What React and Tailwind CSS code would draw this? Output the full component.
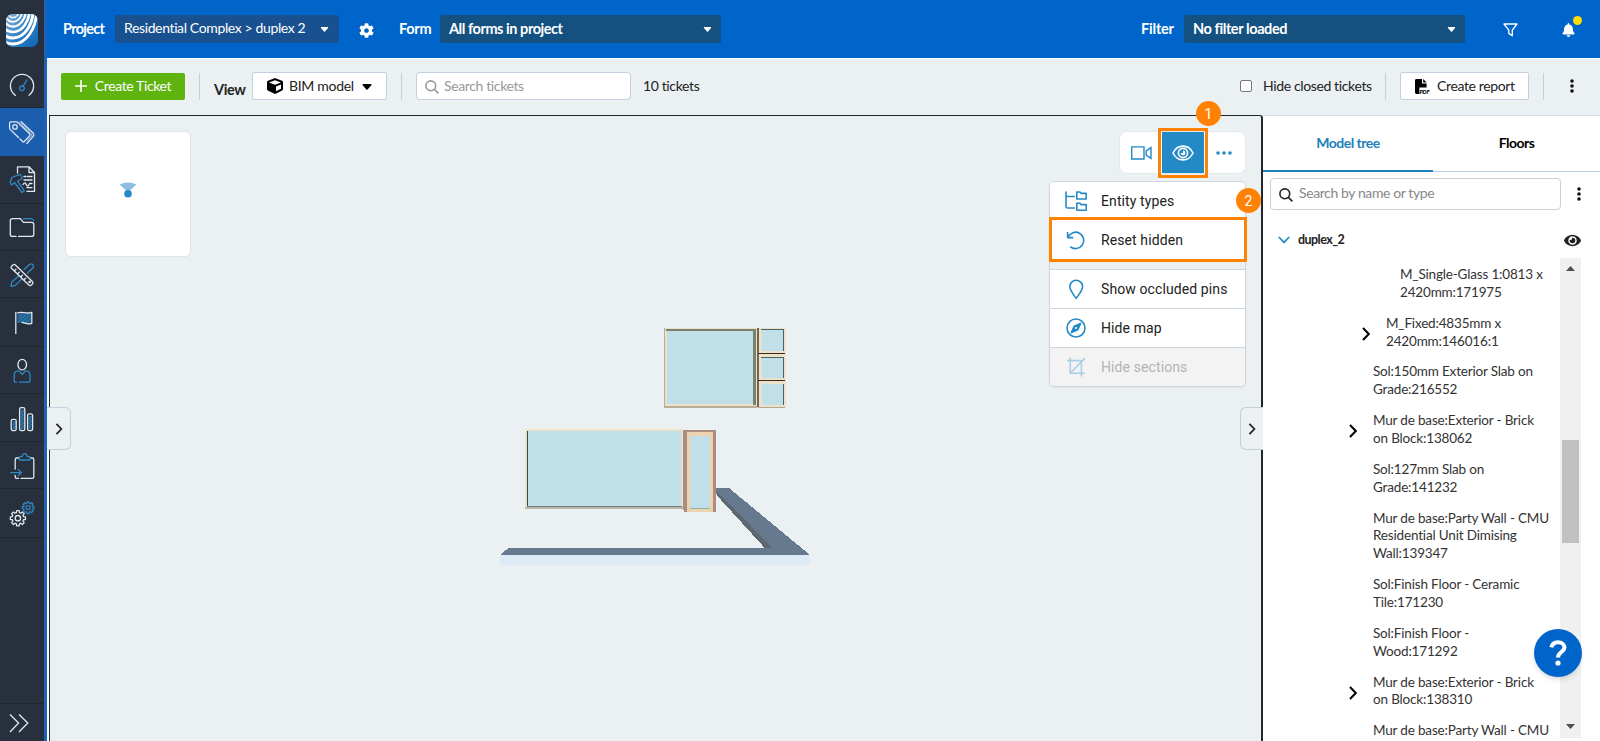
import React, { useState } from 'react';
import { FaBell, FaCog, FaCube, FaEye } from 'react-icons/fa';

const treeItems = [
  { name: 'M_Single-Glass 1:0813 x 2420mm:171975', level: 2 },
  { name: 'M_Fixed:4835mm x 2420mm:146016:1', level: 1, expandable: true },
  { name: 'Sol:150mm Exterior Slab on Grade:216552', level: 0 },
  { name: 'Mur de base:Exterior - Brick on Block:138062', level: 0, expandable: true },
  { name: 'Sol:127mm Slab on Grade:141232', level: 0 },
  { name: 'Mur de base:Party Wall - CMU Residential Unit Dimising Wall:139347', level: 0 },
  { name: 'Sol:Finish Floor - Ceramic Tile:171230', level: 0 },
  { name: 'Sol:Finish Floor - Wood:171292', level: 0 },
  { name: 'Mur de base:Exterior - Brick on Block:138310', level: 0, expandable: true },
  { name: 'Mur de base:Party Wall - CMU', level: 0 },
];

const levelPadding = ['pl-[110px]', 'pl-[123px]', 'pl-[137px]'];

const gearPath = (cx, cy, outer, inner) => {
  const points = [];
  for (let i = 0; i < 8; i++) {
    const base = (i * Math.PI) / 4;
    [[-0.26, inner], [-0.17, outer], [0.17, outer], [0.26, inner]].forEach(([da, r]) => {
      points.push(`${(cx + r * Math.cos(base + da)).toFixed(2)} ${(cy + r * Math.sin(base + da)).toFixed(2)}`);
    });
  }
  return `M${points.join('L')}Z`;
};

const BLUE = '#3187c0';

// icons are drawn on the sidebar's own grid, so each view box starts at its row
const sidebarItems = [
  {
    id: 'dashboard', top: 61, className: 'h-[47px]',
    icon: (
      <>
        <path d="M15.5 95.5A11.6 11.6 0 1 1 29 95.2" />
        <path d="M23 86.3 26.8 80" stroke={BLUE} />
        <circle cx="22" cy="88.3" r="2.3" stroke={BLUE} />
      </>
    ),
  },
  {
    id: 'tickets', top: 108, active: true, className: 'h-12',
    icon: (
      <>
        <path d="M18.5 137.5 10.4 129.6Q9.6 128.8 9.6 127.8V123Q9.6 121.8 10.8 121.8H16Q17.2 121.8 18 122.6L29.6 133.8Q30.5 134.9 29.6 135.9L24.5 141.2M20 139 22.5 141.5Q23.5 142.3 24.5 141.2" />
        <path d="M21.2 121.8 33.3 133.3Q34.2 135 33.3 136.4L26.8 143.5" />
        <path d="M19.2 121.8 31.5 134Q32.4 135 31.5 136L27.5 140.5" strokeWidth="0.7" />
        <circle cx="15" cy="126.9" r="2.2" />
      </>
    ),
  },
  {
    id: 'reports', top: 156, className: 'h-12',
    icon: (
      <>
        <path d="M17.5 173V166.8H29L34.5 172.5V191.4H27M29 166.8V172.5H34.5" />
        <path d="M24 176.5H26M27.5 176.5H32M24 180H32M23 184.5C25 181.5 25.5 183 26.5 185S28.5 186 29.5 183.5L32 183.5M27 187.6H32" />
        <path d="M10.3 182.5 11.8 177.5 20.2 174.3 22.4 178.3 17.6 181.2 18.4 182.4 24.4 190.8 22 192.6 15.6 184 14.8 182.6 11.4 185Z" stroke={BLUE} />
      </>
    ),
  },
  {
    id: 'documents', top: 204, className: 'h-[47px]',
    icon: (
      <>
        <path d="M16 236.4H12.6Q10.3 236.4 10.3 234.2V220.8Q10.3 218.6 12.5 218.6H20.4L23.4 222.4H31.6Q33.8 222.4 33.8 224.6V234.2Q33.8 236.4 31.6 236.4H18.5" />
        <path d="M23.5 218.6H31Q33.4 218.6 33.8 220.6" stroke={BLUE} />
      </>
    ),
  },
  {
    id: 'drawings', top: 251, className: 'h-[47px]',
    icon: (
      <>
        <path d="M24 269.5 29.6 264.6Q31.5 263.2 33 264.7 34.2 266.2 33 267.8L27.5 273M18.6 276 11.8 282 11 286.4 15.4 285.4 21.8 279" stroke={BLUE} />
        <path d="M11.2 268Q10.6 267 11.5 266.2L13.2 264.8Q14.4 264 15.4 265L32.6 281.8Q33.4 282.8 32.6 283.8L31 285.2Q29.9 286 28.8 285Z" />
        <path d="M14.4 270.8 16 269.2M17.6 273.8 19.2 272.2M20.8 276.8 22.4 275.2M24 279.8 25.6 278.2" />
        <circle cx="29.6" cy="282" r="0.7" />
      </>
    ),
  },
  {
    id: 'flags', top: 298, className: 'h-[49px]',
    icon: (
      <>
        <path d="M17.5 322.5V314.5C22 311.5 26 315 31 313V323C26 325 22 321.2 17.5 323.4Z" fill="#23628f" stroke="none" />
        <path d="M18.5 318 22 314M18.5 322 25.5 314.5M22.5 322 29 314.8M26 323 30.5 318" stroke={BLUE} strokeWidth="0.9" />
        <path d="M15.8 333.4V312.5M17.5 313C22 310.8 26 314.6 31.8 312.3V323.3C28 325 25 322.8 22 322.4" />
      </>
    ),
  },
  {
    id: 'people', top: 347, className: 'h-[47px]',
    icon: (
      <>
        <ellipse cx="22.2" cy="364.6" rx="4.3" ry="5.3" />
        <path d="M16.5 382.2H15.2Q14.2 382.2 14.2 381V375Q14.2 370.8 18.4 370.8H19L22.2 374.5 25.3 370.8H26Q30 370.8 30 375V381Q30 382.2 28.8 382.2H19.5" stroke={BLUE} />
      </>
    ),
  },
  {
    id: 'statistics', top: 394, className: 'h-12',
    icon: (
      <>
        <path d="M12.8 421H15.5V429.5H12.8ZM21 409.5H23.8V429.5H21ZM28.8 416H31.5V429.5H28.8Z" fill="#23628f" stroke="none" />
        <path d="M12.5 425 15 422.5M12.5 429 15 426.5M21 413 23.5 410.5M21 417 23.5 414.5M21 421 23.5 418.5M21 425 23.5 422.5M21 429 23.5 426.5M29 419 31.5 416.5M29 423 31.5 420.5M29 427 31.5 424.5" stroke={BLUE} strokeWidth="0.9" />
        <rect x="11.2" y="419.4" width="5" height="11.2" rx="1.6" />
        <rect x="19.6" y="407.6" width="5.2" height="23" rx="1.6" />
        <rect x="27.6" y="413.8" width="5" height="16.8" rx="1.6" />
      </>
    ),
  },
  {
    id: 'tasks', top: 442, className: 'h-[47px]',
    icon: (
      <>
        <path d="M18.6 458H16.6Q15.2 458 15.2 459.4V469M15.2 475.5V477Q15.2 478.4 16.6 478.4H18.5M21 478.4H32.4Q33.8 478.4 33.8 477V459.4Q33.8 458 32.4 458H30.6" />
        <path d="M19.4 460V456.6H22.2Q22.4 453.6 24.7 453.6 27 453.6 27.2 456.6H30V460ZM10.5 472.6H21.4M18.2 469.4 21.4 472.6 18.2 475.8" stroke={BLUE} />
      </>
    ),
  },
  {
    id: 'settings', top: 489, className: 'h-[49px]',
    icon: (
      <>
        <path d={gearPath(17.9, 518.2, 7.7, 5.8)} />
        <circle cx="17.9" cy="518.2" r="2.7" />
        <path d={gearPath(28.1, 507.7, 6, 4.6)} stroke={BLUE} />
        <circle cx="28.1" cy="507.7" r="2" stroke={BLUE} />
      </>
    ),
  },
];

const menuItems = [
  {
    label: 'Entity types', className: 'h-[38px]',
    icon: <path d="M2 1.5V16.5Q2 18 3.5 18H11M2 6.5H11M12.8 2H16L17 3.4H22.2V9H12.8ZM12.8 13.2H16L17 14.6H22.2V20.2H12.8Z" />,
  },
  {
    label: 'Reset hidden', className: 'h-10',
    icon: <path d="M3.6 3V8.6H9.2M4 8.2A8.2 8.2 0 1 1 6.2 17.6" />,
  },
  {
    label: 'Show occluded pins', className: 'h-[39px] mt-[9px] border-t',
    icon: <path d="M12.2 20.4C9.4 16.4 5.8 12.4 5.8 8.6A6.4 6.4 0 0 1 18.6 8.6C18.6 12.4 15 16.4 12.2 20.4Z" />,
  },
  {
    label: 'Hide map', className: 'h-[39px] border-t',
    icon: (
      <>
        <circle cx="12" cy="11" r="9" />
        <path d="M16.6 6.4 13.8 12.8 7.4 15.6 10.2 9.2Z" fill="#248ac6" />
        <circle cx="12" cy="11" r="1" fill="#fff" stroke="none" />
      </>
    ),
  },
  {
    label: 'Hide sections', className: 'h-[39px] border-t', disabled: true,
    icon: <path d="M6.2 1.5V17.2H20.8M3 4.6H17.4V20.5M6.2 17.2 20.8 2.4" />,
  },
];

const Caret = ({ className }) => (
  <svg className={className} width="10" height="6" viewBox="0 0 10 6" fill="currentColor">
    <path d="M1.2 0H8.8Q10 .2 9.3 1.2L5.6 5.4Q5 6 4.4 5.4L.7 1.2Q0 .2 1.2 0Z" />
  </svg>
);

const Dots = () => (
  <svg width="4" height="14" viewBox="0 0 4 14" fill="#111">
    <circle cx="2" cy="2" r="1.8" />
    <circle cx="2" cy="7" r="1.8" />
    <circle cx="2" cy="12" r="1.8" />
  </svg>
);

const Chevron = ({ className }) => (
  <svg className={className} width="8" height="14" viewBox="0 0 8 14" fill="none" stroke="currentColor" strokeWidth="2">
    <path d="M1 1 6.8 7 1 13" />
  </svg>
);

const SearchIcon = ({ className }) => (
  <svg className={className} width="14" height="14" viewBox="0 0 14 14" fill="none" stroke="currentColor" strokeWidth="1.6">
    <circle cx="5.8" cy="5.8" r="4.9" />
    <path d="M9.4 9.4 13.4 13.4" />
  </svg>
);

const Divider = ({ className }) => <div className={`h-[27px] w-px shrink-0 bg-[#c3d0dc] ${className}`} />;

const Sidebar = () => (
  <nav className="flex h-full w-11 shrink-0 flex-col bg-[#28303d]">
    <div className="flex h-[61px] pl-1.5 pt-3.5">
      <svg width="32" height="33" viewBox="0 0 32 33">
        <defs>
          <linearGradient id="logoFill" x1="0" y1="0" x2="1" y2="1">
            <stop offset="0" stopColor="#8db5da" />
            <stop offset="0.55" stopColor="#2a7cc3" />
            <stop offset="1" stopColor="#0d68b4" />
          </linearGradient>
          <clipPath id="logoClip">
            <rect width="32" height="33" rx="6.5" />
          </clipPath>
        </defs>
        <g clipPath="url(#logoClip)">
          <rect width="32" height="33" fill="url(#logoFill)" />
          <g fill="none" stroke="#fff">
            <ellipse cx="7" cy="-5" rx="6.4" ry="8.6" strokeWidth="1.3" />
            <ellipse cx="7" cy="-5" rx="9.6" ry="12.8" strokeWidth="1.7" />
            <ellipse cx="7" cy="-5" rx="13" ry="17.6" strokeWidth="2.2" />
            <ellipse cx="7" cy="-5" rx="16.6" ry="23" strokeWidth="2.7" />
            <ellipse cx="7" cy="-5" rx="20.2" ry="29" strokeWidth="3" />
            <ellipse cx="7" cy="-5" rx="23.8" ry="35" strokeWidth="2.8" />
          </g>
        </g>
      </svg>
    </div>
    {sidebarItems.map((item) => (
      <a
        key={item.id}
        className={`block w-11 border-b ${item.className} ${item.active ? 'border-[#1c5eae] bg-[#1c5eae]' : 'border-[#1f2631]'}`}
      >
        <svg
          width="44"
          height="46"
          viewBox={`0 ${item.top} 44 46`}
          fill="none"
          stroke="#dfe7ef"
          strokeWidth="1.3"
          strokeLinejoin="round"
          strokeLinecap="round"
        >
          {item.icon}
        </svg>
      </a>
    ))}
    <a className="mt-auto h-[38px] border-t border-[#1f2631]">
      <svg width="44" height="38" viewBox="0 0 44 38" fill="none" stroke="#dfe7ef" strokeWidth="1.3">
        <path d="M10 10.5 18.6 19 10 28M19 10.5 27.8 19 19 28" />
      </svg>
    </a>
  </nav>
);

const Header = () => (
  <header className="flex h-[58px] shrink-0 items-center bg-[#0065cb] pl-4 text-[14.5px] font-bold text-white">
    <span className="w-[52px] tracking-[-0.7px]">Project</span>
    <button className="flex h-7 w-56 items-center justify-between whitespace-nowrap rounded-[2px] bg-[#19508f] pl-[9px] pr-2.5 text-[14px] font-normal tracking-[-0.37px]">
      <span className="mb-[3px]">Residential Complex &gt; duplex 2</span>
      <Caret className="h-[5px] w-[9px]" />
    </button>
    <FaCog className="ml-5 mt-0.5 size-[15px]" />
    <span className="ml-[25px] w-[41px] tracking-[-0.3px]">Form</span>
    <button className="flex h-7 w-[281px] items-center justify-between rounded-[2px] bg-[#155180] pl-[9px] pr-[9px] font-bold tracking-[-0.45px]">
      All forms in project
      <Caret className="h-[5px] w-[9px]" />
    </button>
    <span className="ml-auto w-[43px] tracking-[-0.2px]">Filter</span>
    <button className="flex h-7 w-[281px] items-center justify-between rounded-[2px] bg-[#155180] pl-[9px] pr-[9px] font-bold tracking-[-0.4px]">
      No filter loaded
      <Caret className="h-[5px] w-[9px]" />
    </button>
    <svg className="ml-[38px] mt-0.5" width="15" height="14" viewBox="0 0 15 14" fill="none" stroke="#fff" strokeWidth="1.3" strokeLinejoin="round">
      <path d="M1 1H14L9.3 7.2V12.8L5.8 10.4V7.2Z" />
    </svg>
    <div className="relative ml-[44px] mr-[25px]">
      <FaBell className="mt-0.5 h-3.5 w-[13px]" />
      <span className="absolute -right-[7px] -top-[5px] size-[9px] rounded-full bg-[#fbdc06]" />
    </div>
  </header>
);

const Toolbar = () => {
  const [hideClosed, setHideClosed] = useState(false);

  return (
    <div className="flex h-[57px] shrink-0 items-center border-t border-white bg-[#ebf0f3] pb-0.5 pl-3.5 text-[14px] tracking-[-0.37px] text-[#222]">
      <button className="flex h-[27px] w-[124px] items-center justify-center gap-2 rounded-[2px] bg-[#5eb30f] text-white">
        <svg width="12" height="12" viewBox="0 0 12 12" stroke="#fff" strokeWidth="1.6">
          <path d="M6 0V12M0 6H12" />
        </svg>
        <span className="mb-0.5">Create Ticket</span>
      </button>
      <Divider className="ml-3.5" />
      <span className="ml-3.5 mt-2 w-[38px] text-[14.5px] font-bold tracking-[-0.4px]">View</span>
      <button className="flex h-7 w-[135px] items-center whitespace-nowrap rounded-[2px] border border-[#c3d0dc] bg-white pl-3.5">
        <FaCube className="mr-1.5 size-4 text-black" />
        <span className="mb-0.5 w-16 text-left tracking-[-0.3px]">BIM model</span>
        <Caret className="ml-[9px] mt-0.5 text-black" />
      </button>
      <Divider className="ml-3.5" />
      <div className="ml-3.5 flex h-7 w-[215px] items-center rounded border border-[#c3d0dc] bg-white pl-2">
        <SearchIcon className="mr-[5px] mt-0.5 text-[#999]" />
        <input className="mb-0.5 w-40 tracking-[-0.37px] outline-none placeholder:text-[#999]" placeholder="Search tickets" />
      </div>
      <span className="mb-0.5 ml-3">10 tickets</span>
      <input
        type="checkbox"
        checked={hideClosed}
        onChange={() => setHideClosed(!hideClosed)}
        className="ml-auto size-3 shrink-0 appearance-none rounded-[2px] border border-[#767676] bg-white"
      />
      <span className="mb-0.5 ml-[11px] w-[109px] whitespace-nowrap">Hide closed tickets</span>
      <Divider className="ml-[13px]" />
      <button className="ml-3.5 flex h-7 w-[129px] items-center rounded-[2px] border border-[#c3d0dc] bg-white pl-3.5">
        <svg className="mr-[7px] mt-0.5" width="15" height="16" viewBox="0 0 15 16">
          <path d="M1.4 0H7V4.4H11.6V8.6H4.4V15H1.4Q0 15 0 13.6V1.4Q0 0 1.4 0ZM8.2 0 11.6 3.4H8.2Z" />
          <text x="4.4" y="15.2" className="text-[5.8px] font-black italic tracking-[-0.2px]">PDF</text>
        </svg>
        <span className="mb-0.5">Create report</span>
      </button>
      <Divider className="ml-3.5" />
      <div className="ml-[26px] mr-[26px]">
        <Dots />
      </div>
    </div>
  );
};

const Model = () => (
  <svg className="ml-[450px] mt-[210px]" width="314" height="240" viewBox="500 326 314 240" shapeRendering="crispEdges">
    <path d="M500 555H810V565H500Z" fill="#dfeaf7" />
    <path d="M500 555 508 548.3H766L716 493V488H729L810 555Z" fill="#67798f" />
    <path d="M765 548.3 716.5 495V491L773 548.3Z" fill="#5f6871" />

    {/* upper windows */}
    <path d="M664 328H757V408H664Z" fill="#ece1c9" />
    <path d="M664 328H665V406H757V408H664Z" fill="#b9ad97" />
    <path d="M667 330H754V404H667Z" fill="#c1dfe9" />
    <path d="M666 329H756V405H753V331H666Z" fill="#7a806e" />
    <path d="M757 328H759V407H757Z" fill="#6f6656" />
    <path d="M759 328H786V407H759Z" fill="#ece1c9" />
    <path d="M758 353H785V354H758ZM758 380H785V381H758Z" fill="#3a2a22" />
    <path d="M758 407H785V408H758Z" fill="#b3a68f" />
    <path d="M762 329H784V351H762ZM762 357H784V378H762ZM762 384H784V405H762Z" fill="#c1dfe9" />
    <path d="M761 329H784V351H783V330H761ZM761 357H784V378H783V358H761ZM783 384H784V405H783Z" fill="#4d6264" />

    {/* lower window and door */}
    <path d="M525 429H683V509H525Z" fill="#ece1c9" />
    <path d="M525 507H683V509H525Z" fill="#bcb7a8" />
    <path d="M528 431H681V506H528Z" fill="#c1dfe9" />
    <path d="M527 431H528V506H527Z" fill="#2f4c4d" />
    <path d="M527 506H682V507H527Z" fill="#6d7f78" />
    <path d="M683 430H716V512H684V510H683Z" fill="#ad8d80" />
    <path d="M687 432H713V512H687Z" fill="#ead3ae" />
    <path d="M690 436H710V508H690Z" fill="#c1dfe9" />
    <path d="M690 508H710V509H690Z" fill="#9eb0a0" />
  </svg>
);

const StepBadge = ({ children, className }) => (
  <span className={`absolute z-20 flex size-[25px] items-center justify-center rounded-full bg-[#ff8205] font-[Roboto] text-sm text-white ${className}`}>
    {children}
  </span>
);

const ViewMenu = () => (
  <div className="absolute right-[15px] top-[65px] w-[197px]">
    <div className="overflow-hidden rounded-[5px] border border-[#cfd6e0] bg-[#eceff1] shadow-xs">
      {menuItems.map((item) => (
        <button
          key={item.label}
          className={`flex w-full items-center border-[#cfd6e0] pl-3.5 font-[Roboto] text-[14px] tracking-[0.1px] ${item.className} ${item.disabled ? 'bg-[#f3f3f4] text-[#b4b4b4]' : 'bg-white text-[#222]'}`}
        >
          <svg
            className={item.disabled ? 'mr-[13px] opacity-35' : 'mr-[13px]'}
            width="24"
            height="22"
            viewBox="0 0 24 22"
            fill="none"
            stroke="#248ac6"
            strokeWidth="1.6"
            strokeLinejoin="round"
          >
            {item.icon}
          </svg>
          {item.label}
        </button>
      ))}
    </div>
    <div className="absolute -right-px left-0 top-[36px] h-[45px] border-[3px] border-[#ff8205]" />
    <StepBadge className="-right-[15px] top-[7px]">2</StepBadge>
  </div>
);

const Viewer = () => (
  <main className="relative w-[1214px] shrink-0 rounded-tr-[3px] border-l border-r-2 border-t border-[#22272c] bg-[#ebf0f3]">
    <div className="absolute left-[15px] top-[15px] flex size-[126px] items-center justify-center rounded-md border border-[#e0e4e8] bg-white">
      <svg width="18" height="18" viewBox="0 0 18 18" className="-mt-2">
        <path d="M.6 3.6Q9-.8 17.4 3.6L11 9.4H7Z" fill="#8dc0e0" />
        <circle cx="9" cy="12.8" r="3.8" fill="#248ac6" />
      </svg>
    </div>
    <Model />

    <div className="absolute right-[15px] top-[15px] flex h-[43px] w-[127px] items-center rounded-lg border border-[#e4e8ec] bg-white text-[#248ac6]">
      <svg className="ml-[11px]" width="21" height="14" viewBox="0 0 21 14" fill="none" stroke="currentColor" strokeWidth="1.4">
        <path d="M.7 .9H13V13H.7ZM15.2 4.8 20 1.6V12.4L15.2 9.2Z" />
      </svg>
      <div className="ml-2.5 flex h-[41px] w-[42px] items-center justify-center bg-[#248ac6]">
        <svg width="22" height="16" viewBox="0 0 22 16" fill="none" stroke="#fff" strokeWidth="1.6">
          <path d="M1 8C5.5-1.2 16.5-1.2 21 8 16.5 17.2 5.5 17.2 1 8Z" />
          <circle cx="11" cy="8" r="4.6" />
          <path d="M11 5.6A2.4 2.4 0 1 1 8.6 8H11Z" fill="#fff" stroke="none" />
        </svg>
      </div>
      <svg className="ml-3" width="16" height="4" viewBox="0 0 16 4" fill="currentColor">
        <circle cx="2" cy="2" r="1.8" />
        <circle cx="8" cy="2" r="1.8" />
        <circle cx="14" cy="2" r="1.8" />
      </svg>
    </div>
    <div className="absolute right-[53px] top-3 size-[50px] border-[3px] border-[#ff8205]" />
    <StepBadge className="-top-[15px] right-10">1</StepBadge>
    <ViewMenu />

    <button className="absolute -left-[3px] top-[291px] flex h-[43px] w-6 items-center justify-center rounded-r-md border border-l-0 border-[#c3d0dc] bg-[#ebf0f3] pl-px text-[#222]">
      <Chevron className="h-3" />
    </button>
    <button className="absolute -right-0.5 top-[291px] flex h-[43px] w-[23px] items-center justify-center rounded-l-md border border-r-0 border-[#c3d0dc] bg-[#ebf0f3] text-[#222]">
      <Chevron className="h-3" />
    </button>
  </main>
);

const ModelTree = () => (
  <aside className="flex min-w-0 flex-1 flex-col bg-white text-[#222]">
    <div className="flex h-[57px] shrink-0 border-t border-[#d3dce4] text-[14px] font-bold tracking-[-0.5px]">
      <button className="w-[170px] border-b-2 border-[#1d7fbc] pb-0.5 text-[#1d7fbc]">Model tree</button>
      <button className="flex-1 border-b border-[#b9cbdc] pb-[3px] text-black">Floors</button>
    </div>
    <div className="ml-[7px] mt-[6px] flex shrink-0 items-center">
      <div className="flex h-8 w-[291px] items-center rounded border border-[#cfcfcf] pl-2">
        <SearchIcon className="mr-1.5 mt-0.5 text-[#222]" />
        <input className="mb-[3px] w-60 text-[14px] tracking-[-0.4px] outline-none placeholder:text-[#888]" placeholder="Search by name or type" />
      </div>
      <div className="ml-4">
        <Dots />
      </div>
    </div>
    <div className="mt-[21px] flex h-[18px] shrink-0 items-center pl-[15px] pr-[19px] text-[12.5px] font-bold tracking-[-0.55px]">
      <svg width="12" height="8" viewBox="0 0 12 8" fill="none" stroke="#248ac6" strokeWidth="1.7">
        <path d="M.8 1 6 6.4 11.2 1" />
      </svg>
      <span className="ml-2">duplex_2</span>
      <FaEye className="ml-auto size-[17px]" />
    </div>
    <div className="mt-[9px] flex h-[480px] shrink-0">
      <ul className="w-[297px] overflow-hidden pt-2 text-[13.5px] leading-[17.9px] tracking-[-0.17px] text-[#333]">
        {treeItems.map((item) => (
          <li key={item.name} className={`relative mb-[12.9px] pr-[9px] ${levelPadding[item.level]}`}>
            {item.expandable && (
              <Chevron className={`absolute top-[12px] text-black ${item.level === 1 ? 'left-[99px]' : 'left-[86px]'}`} />
            )}
            {item.name}
          </li>
        ))}
      </ul>
      <div className="flex w-[21px] flex-col items-center bg-[#f0f0f0]">
        <svg className="mt-2" width="9" height="5" viewBox="0 0 9 5" fill="#505050">
          <path d="M0 5 4.5 0 9 5Z" />
        </svg>
        <div className="mt-[169px] h-[103px] w-[17px] bg-[#c1c1c1]" />
        <svg className="mb-[9px] mt-auto" width="9" height="5" viewBox="0 0 9 5" fill="#505050">
          <path d="M0 0 4.5 5 9 0Z" />
        </svg>
      </div>
    </div>
  </aside>
);

const App = () => {
  return (
    <div className="relative flex h-[741px] w-full overflow-hidden font-[Lato,sans-serif]">
      <Sidebar />
      <div className="w-[3px] shrink-0 bg-[#1c62b5]" />
      <div className="flex min-w-0 flex-1 flex-col">
        <Header />
        <Toolbar />
        <div className="flex min-h-0 flex-1 border-l-2 border-white">
          <Viewer />
          <ModelTree />
        </div>
      </div>
      <button className="absolute bottom-[64px] right-[18px] flex size-12 items-center justify-center rounded-full bg-[#0065cb] shadow-md">
        <svg width="18" height="26" viewBox="0 0 18 26" fill="none" stroke="#fff" strokeWidth="4">
          <path d="M2.4 7.4C3 4 5.6 2.2 9 2.2 12.6 2.2 15.4 4.4 15.4 7.6 15.4 12 9 12.2 9 17.4" />
          <circle cx="9" cy="23" r="2.6" fill="#fff" stroke="none" />
        </svg>
      </button>
    </div>
  );
};

export default App;
